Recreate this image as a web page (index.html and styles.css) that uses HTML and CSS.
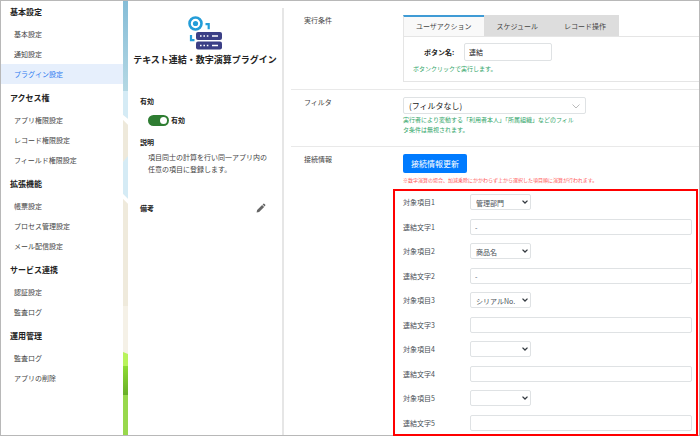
FILE: index.html
```html
<!DOCTYPE html>
<html lang="ja">
<head>
<meta charset="UTF-8">
<meta name="viewport" content="width=device-width, initial-scale=1.0">
<title>プラグイン設定</title>
<link rel="stylesheet" href="styles.css">
</head>
<body>
<div class="page">
    <nav class="sidebar">
        <h2>基本設定</h2>
        <a href="#">基本設定</a>
        <a href="#">通知設定</a>
        <a href="#" class="current">プラグイン設定</a>
        <h2>アクセス権</h2>
        <a href="#">アプリ権限設定</a>
        <a href="#">レコード権限設定</a>
        <a href="#">フィールド権限設定</a>
        <h2>拡張機能</h2>
        <a href="#">帳票設定</a>
        <a href="#">プロセス管理設定</a>
        <a href="#">メール配信設定</a>
        <h2>サービス連携</h2>
        <a href="#">認証設定</a>
        <a href="#">監査ログ</a>
        <h2>運用管理</h2>
        <a href="#">監査ログ</a>
        <a href="#">アプリの削除</a>
    </nav>

    <!-- background scenery between the two panes -->
    <svg class="scenery" viewBox="0 0 5 434" preserveAspectRatio="none">
        <defs>
            <linearGradient id="sky" x1="0" y1="0" x2="0" y2="1">
                <stop offset="0" stop-color="#86bdd7"/>
                <stop offset="1" stop-color="#b4d8e4"/>
            </linearGradient>
            <linearGradient id="grass" x1="0" y1="0" x2="0" y2="1">
                <stop offset="0" stop-color="#8fdc34"/>
                <stop offset="1" stop-color="#68ae28"/>
            </linearGradient>
        </defs>
        <rect width="5" height="434" fill="#f5f1e7"/>
        <rect width="5" height="90" fill="url(#sky)"/>
        <path d="M0 90H5V118L0 114Z" fill="#d5ebf5"/>
        <path d="M0 114L5 118V124L0 119Z" fill="#fff"/>
        <path d="M0 119L5 124V156L0 161Z" fill="#eee9db"/>
        <path d="M0 161L5 155V198L0 193Z" fill="#d5ebf5"/>
        <path d="M0 193L5 198V203L0 198Z" fill="#fff"/>
        <path d="M0 198L5 203V305H0Z" fill="#efeadc"/>
        <path d="M0 351L5 353V366H0Z" fill="#b9f35c"/>
        <rect y="365" width="5" height="29" fill="url(#grass)"/>
        <rect y="394" width="5" height="40" fill="#98d84c"/>
    </svg>

    <section class="plugin">
        <svg class="logo" viewBox="0 0 34 34">
            <circle cx="7.5" cy="7.5" r="6" fill="none" stroke="#249dd8" stroke-width="2.6"/>
            <circle cx="7.5" cy="7.5" r="2.6" fill="#249dd8"/>
            <path d="M17.5 8.2h3.2v5M3 19v5.2h3.5" fill="none" stroke="#249dd8" stroke-width="2.2"/>
            <rect x="8" y="16" width="26" height="8" rx="2" fill="#3b3f86"/>
            <rect x="8" y="25.5" width="26" height="8" rx="2" fill="#3b3f86"/>
            <path d="M12 20h1.6m1.8 0H17m1.8 0h1.6M12 29.5h1.6m1.8 0H17m1.8 0h1.6M24 20h6M24 29.5h6" stroke="#fff" stroke-width="1.6"/>
        </svg>
        <h1>テキスト連結・数字演算プラグイン</h1>
        <h3>有効</h3>
        <label class="switch"><input type="checkbox" checked>有効</label>
        <h3>説明</h3>
        <p>項目同士の計算を行い同一アプリ内の任意の項目に登録します。</p>
        <div class="remarks">
            <h3>備考</h3>
            <button type="button" aria-label="備考を編集">
                <svg viewBox="0 0 10 10"><path d="M.6 9.4l.5-2.5 5-5 2 2-5 5zM6.600 1.400l.8-.7q.4-.3.8 0l1.100 1.100q.3.4 0 .8l-.7.8z" fill="#666"/></svg>
            </button>
        </div>
    </section>

    <main class="settings">
        <section class="row trigger">
            <h2>実行条件</h2>
            <div>
                <div class="tabs">
                    <button type="button" class="active">ユーザアクション</button>
                    <button type="button">スケジュール</button>
                    <button type="button">レコード操作</button>
                </div>
                <div class="tab-body">
                    <div class="button-name">
                        <label for="btnName">ボタン名:</label>
                        <input id="btnName" type="text" value="連結">
                    </div>
                    <p class="hint">ボタンクリックで実行します。</p>
                </div>
            </div>
        </section>

        <section class="row filter">
            <h2><label for="filter">フィルタ</label></h2>
            <div class="filter-field">
                <div class="select">
                    <select id="filter"><option>(フィルタなし)</option></select>
                    <svg viewBox="0 0 8 5"><path d="M.5 .5L4 4L7.5 .5" fill="none" stroke="#bbb"/></svg>
                </div>
                <p class="hint">実行者により変動する「利用者本人」「所属組織」などのフィルタ条件は無視されます。</p>
            </div>
        </section>

        <section class="row connection">
            <h2>接続情報</h2>
            <div>
                <button type="button" class="update">接続情報更新</button>
                <p class="note">※数字演算の場合、加減乗除にかかわらず上から選択した項目順に演算が行われます。</p>
                <div class="items">
                    <div class="item">
                        <label for="t1">対象項目1</label>
                        <div class="select"><select id="t1"><option>管理部門</option></select><svg viewBox="0 0 6 4"><path d="M.5 .6L3 3L5.5 .6" fill="none" stroke="#343a40" stroke-width="1.3"/></svg></div>
                    </div>
                    <div class="item">
                        <label for="c1">連結文字1</label>
                        <input id="c1" type="text" value="-">
                    </div>
                    <div class="item">
                        <label for="t2">対象項目2</label>
                        <div class="select"><select id="t2"><option>商品名</option></select><svg viewBox="0 0 6 4"><path d="M.5 .6L3 3L5.5 .6" fill="none" stroke="#343a40" stroke-width="1.3"/></svg></div>
                    </div>
                    <div class="item">
                        <label for="c2">連結文字2</label>
                        <input id="c2" type="text" value="-">
                    </div>
                    <div class="item">
                        <label for="t3">対象項目3</label>
                        <div class="select"><select id="t3"><option>シリアルNo.</option></select><svg viewBox="0 0 6 4"><path d="M.5 .6L3 3L5.5 .6" fill="none" stroke="#343a40" stroke-width="1.3"/></svg></div>
                    </div>
                    <div class="item">
                        <label for="c3">連結文字3</label>
                        <input id="c3" type="text">
                    </div>
                    <div class="item">
                        <label for="t4">対象項目4</label>
                        <div class="select"><select id="t4"><option></option></select><svg viewBox="0 0 6 4"><path d="M.5 .6L3 3L5.5 .6" fill="none" stroke="#343a40" stroke-width="1.3"/></svg></div>
                    </div>
                    <div class="item">
                        <label for="c4">連結文字4</label>
                        <input id="c4" type="text">
                    </div>
                    <div class="item">
                        <label for="t5">対象項目5</label>
                        <div class="select"><select id="t5"><option></option></select><svg viewBox="0 0 6 4"><path d="M.5 .6L3 3L5.5 .6" fill="none" stroke="#343a40" stroke-width="1.3"/></svg></div>
                    </div>
                    <div class="item">
                        <label for="c5">連結文字5</label>
                        <input id="c5" type="text">
                    </div>
                </div>
            </div>
        </section>
    </main>
</div>
</body>
</html>
```

FILE: styles.css
```css
* {
    box-sizing: border-box;
}
body {
    margin: 0;
    color: #444;
    background: #fff;
    font: 7px/12px "Noto Sans CJK JP", sans-serif;
}
h1, h2, h3, p {
    margin: 0;
    font-size: inherit;
}
button, input, select {
    margin: 0;
    color: inherit;
    font: inherit;
}
.page {
    display: grid;
    grid-template-columns: 122px 5px 156px 1fr;
    min-height: 100vh;
    border: 1px solid #b8b8b8;
}

/* left menu */
.sidebar h2 {
    padding: 4px 9px 2px;
    color: #222;
    font-size: 8px;
    line-height: 20px;
}
.sidebar h2:first-child {
    padding-top: 1px;
}
.sidebar a {
    display: block;
    padding-left: 13px;
    color: #444;
    line-height: 20px;
    text-decoration: none;
}
.sidebar a.current {
    color: #2f7bf0;
    background: #e6effc;
}
.scenery {
    width: 5px;
    height: 100%;
}

/* plugin summary */
.plugin {
    margin-top: 7px;
    padding: 8px 12px;
    border-right: 2px solid #e6e6e6;
}
.logo {
    display: block;
    width: 34px;
    height: 34px;
    margin: 0 auto;
}
.plugin h1 {
    margin: 4px -10px 29px;
    color: #222;
    font-size: 9px;
    text-align: center;
    white-space: nowrap;
}
.plugin h3 {
    color: #222;
}
.switch {
    display: flex;
    align-items: center;
    gap: 2px;
    margin: 7px 0 10px 8px;
    color: #222;
    font-weight: bold;
}
.switch input {
    display: flex;
    justify-content: flex-end;
    appearance: none;
    width: 21px;
    height: 11px;
    padding: 2px;
    border-radius: 6px;
    background: #2e7d32;
}
.switch input::before {
    content: "";
    width: 7px;
    height: 7px;
    border-radius: 50%;
    background: #fff;
}
.plugin p {
    margin: 3px 0 27px;
    padding-left: 8px;
}
.remarks {
    display: flex;
    justify-content: space-between;
    align-items: center;
    padding-right: 4px;
}
.remarks button {
    display: flex;
    padding: 0;
    border: 0;
    background: none;
}
.remarks svg {
    width: 10px;
    height: 10px;
}

/* settings form */
.settings {
    padding-left: 7px;
}
.row {
    display: grid;
    grid-template-columns: 99px 1fr;
    padding-left: 13px;
    border-bottom: 1px solid #e9e9e9;
}
.row h2 {
    font-weight: normal;
    line-height: 10px;
}
.trigger {
    padding-top: 14px;
    padding-bottom: 7px;
}
.tabs {
    display: flex;
    border-bottom: 1px solid #e5e5e5;
}
.tabs button {
    height: 21px;
    padding: 0 13px 2px;
    border: 0;
    border-top: 2px solid #ddd;
    background: #ddd;
}
.tabs .active {
    padding: 0 12px 2px;
    border-top-color: #3f9bd5;
    border-left: 1px solid #e5e5e5;
    background: #f9f9f9;
}
.tab-body {
    padding: 6px 0 7px 9px;
    border: solid #e5e5e5;
    border-width: 0 0 1px 1px;
}
.button-name {
    display: flex;
    align-items: center;
    margin-bottom: 3px;
}
.button-name label {
    width: 51px;
    padding-left: 11px;
    color: #222;
    font-weight: bold;
}
input[type="text"] {
    height: 16px;
    padding: 0 4px;
    border: 1px solid #dfe2e4;
    border-radius: 2px;
    background: #fff;
}
.button-name input[type="text"] {
    width: 88px;
    height: 18px;
    color: #222;
}
.hint {
    color: #2fa568;
    font-size: 6px;
    line-height: 10px;
}
.filter {
    padding-top: 7px;
    padding-bottom: 11px;
}
.filter-field {
    width: 183px;
}
.filter-field .hint {
    margin-top: 1px;
    padding-right: 8px;
}
.select {
    position: relative;
}
.select select {
    display: block;
    appearance: none;
    width: 100%;
    height: 16px;
    padding: 0 5px;
    border: 1px solid #dfe2e4;
    border-radius: 2px;
    background: #fff;
}
.select svg {
    position: absolute;
    top: 6px;
    right: 3px;
    width: 6px;
    height: 4px;
    pointer-events: none;
}
.filter-field .select select {
    height: 17px;
    color: #222;
    font-size: 8px;
}
.filter-field .select svg {
    top: 7px;
    right: 6px;
    width: 8px;
    height: 5px;
}
.connection {
    padding-top: 7px;
    border-bottom: 0;
}
.update {
    height: 19px;
    padding: 0 8px;
    border: 0;
    border-radius: 2px;
    color: #fff;
    background: #007bff;
    font-size: 8px;
}
.note {
    margin: 1px 0 3px;
    color: #f55;
    font-size: 5px;
}
.items {
    margin: 0 1px -1px -10px;
    padding: 3px 4px 3px 8px;
    border: 2px solid #f00;
}
.item {
    display: grid;
    grid-template-columns: 67px 1fr;
    align-items: start;
    height: 24px;
    color: #495057;
    line-height: 16px;
}
.item:nth-child(odd) {
    height: 25px;
}
.item:last-child {
    height: 16px;
}
.item .select {
    width: 61px;
}
```
